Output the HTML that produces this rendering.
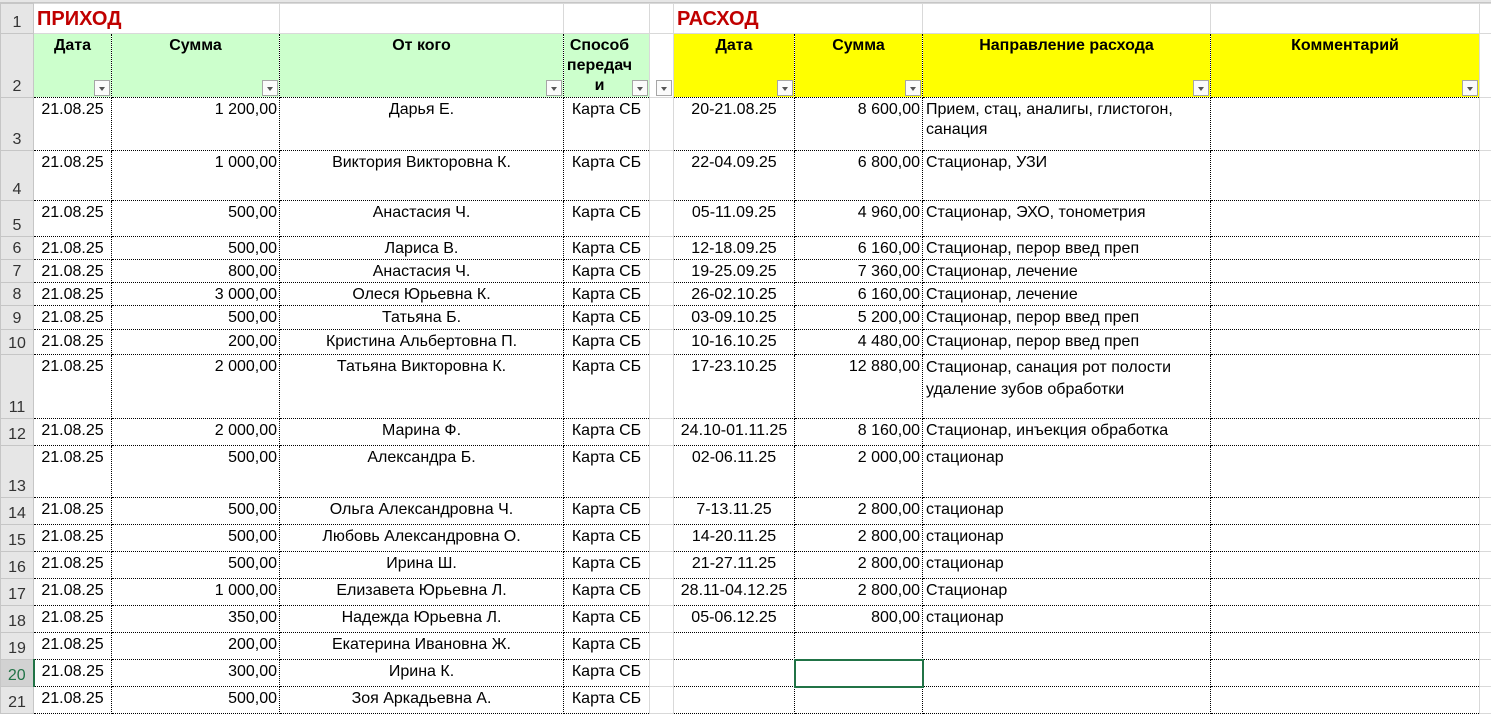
<!DOCTYPE html>
<html><head><meta charset="utf-8">
<style>
body{margin:0;background:#fff;width:1491px;height:696px;overflow:hidden;font-family:"Liberation Sans",sans-serif;font-size:16px;color:#000}
.top{height:3px;background:#e6e6e6;border-bottom:1px solid #c6c6c6;box-sizing:border-box}
table{border-collapse:collapse;table-layout:fixed;position:absolute;top:3px;left:0;width:1491px}
td{border:1px solid #d9d9d9;padding:2px 0 0 0;text-indent:3px;vertical-align:top;white-space:nowrap;overflow:hidden;line-height:20px;position:relative}
td.c,td.g,td.y,td.r{text-indent:0}
td.rh{background:#e6e6e6;border:1px solid #c6c6c6;color:#333;text-align:center;vertical-align:bottom;padding:0 0 1px 0;line-height:18px;text-indent:0}
td.rh.sel{background:#d2d2d2;color:#217346;border-right:2px solid #217346}
.d{border:1px dotted #000}
.c{text-align:center}.r{text-align:right}
.r:after{content:"";display:inline-block;width:2px}
.g{background:#ccffcc;font-weight:bold;text-align:center}
.y{background:#ffff00;font-weight:bold;text-align:center}
.t{color:#c00000;font-weight:bold;font-size:20px;padding-top:5px;overflow:visible}
.w{white-space:normal}
.f{position:absolute;right:1px;bottom:1px;width:16px;height:16px;box-sizing:border-box;border:1px solid #a6a6a6;background:#fbfbfb}
.f:after{content:"";position:absolute;left:4px;top:6px;border-left:3px solid transparent;border-right:3px solid transparent;border-top:4px solid #555}
.selc{outline:2px solid #217346;outline-offset:-1px}
</style></head><body>
<div class="top"></div>
<table>
<colgroup><col style="width:33px"><col style="width:78px"><col style="width:168px"><col style="width:284px"><col style="width:86px"><col style="width:24px"><col style="width:121px"><col style="width:128px"><col style="width:288px"><col style="width:269px"><col style="width:12px"></colgroup>
<tr style="height:30px"><td class="rh">1</td><td class="t" style="border-right-color:transparent">ПРИХОД</td><td style="border-left-color:transparent"></td><td></td><td></td><td></td><td class="t" style="border-right-color:transparent">РАСХОД</td><td style="border-left-color:transparent"></td><td></td><td></td><td></td></tr>
<tr style="height:64px"><td class="rh">2</td><td class="g d">Дата<div class="f"></div></td><td class="g d">Сумма<div class="f"></div></td><td class="g d">От кого<div class="f"></div></td><td class="g d w"><div style="margin-right:14px">Способ передач и</div><div class="f"></div></td><td><div class="f"></div></td><td class="y d">Дата<div class="f"></div></td><td class="y d">Сумма<div class="f"></div></td><td class="y d">Направление расхода<div class="f"></div></td><td class="y d">Комментарий<div class="f"></div></td><td></td></tr>
<tr style="height:53px"><td class="rh">3</td><td class="d c">21.08.25</td><td class="d r">1 200,00</td><td class="d c">Дарья Е.</td><td class="d c">Карта СБ</td><td></td><td class="d c">20-21.08.25</td><td class="d r">8 600,00</td><td class="d w" style="text-indent:0;padding-left:3px">Прием, стац, аналигы, глистогон, санация</td><td class="d"></td><td></td></tr>
<tr style="height:50px"><td class="rh">4</td><td class="d c">21.08.25</td><td class="d r">1 000,00</td><td class="d c">Виктория Викторовна К.</td><td class="d c">Карта СБ</td><td></td><td class="d c">22-04.09.25</td><td class="d r">6 800,00</td><td class="d">Стационар, УЗИ</td><td class="d"></td><td></td></tr>
<tr style="height:36px"><td class="rh">5</td><td class="d c">21.08.25</td><td class="d r">500,00</td><td class="d c">Анастасия Ч.</td><td class="d c">Карта СБ</td><td></td><td class="d c">05-11.09.25</td><td class="d r">4 960,00</td><td class="d">Стационар, ЭХО, тонометрия</td><td class="d"></td><td></td></tr>
<tr style="height:23px"><td class="rh">6</td><td class="d c">21.08.25</td><td class="d r">500,00</td><td class="d c">Лариса В.</td><td class="d c">Карта СБ</td><td></td><td class="d c">12-18.09.25</td><td class="d r">6 160,00</td><td class="d">Стационар, перор введ преп</td><td class="d"></td><td></td></tr>
<tr style="height:23px"><td class="rh">7</td><td class="d c">21.08.25</td><td class="d r">800,00</td><td class="d c">Анастасия Ч.</td><td class="d c">Карта СБ</td><td></td><td class="d c">19-25.09.25</td><td class="d r">7 360,00</td><td class="d">Стационар, лечение</td><td class="d"></td><td></td></tr>
<tr style="height:23px"><td class="rh">8</td><td class="d c">21.08.25</td><td class="d r">3 000,00</td><td class="d c">Олеся Юрьевна К.</td><td class="d c">Карта СБ</td><td></td><td class="d c">26-02.10.25</td><td class="d r">6 160,00</td><td class="d">Стационар, лечение</td><td class="d"></td><td></td></tr>
<tr style="height:24px"><td class="rh">9</td><td class="d c">21.08.25</td><td class="d r">500,00</td><td class="d c">Татьяна Б.</td><td class="d c">Карта СБ</td><td></td><td class="d c">03-09.10.25</td><td class="d r">5 200,00</td><td class="d">Стационар, перор введ преп</td><td class="d"></td><td></td></tr>
<tr style="height:25px"><td class="rh">10</td><td class="d c">21.08.25</td><td class="d r">200,00</td><td class="d c">Кристина Альбертовна П.</td><td class="d c">Карта СБ</td><td></td><td class="d c">10-16.10.25</td><td class="d r">4 480,00</td><td class="d">Стационар, перор введ преп</td><td class="d"></td><td></td></tr>
<tr style="height:64px"><td class="rh">11</td><td class="d c">21.08.25</td><td class="d r">2 000,00</td><td class="d c">Татьяна Викторовна К.</td><td class="d c">Карта СБ</td><td></td><td class="d c">17-23.10.25</td><td class="d r">12 880,00</td><td class="d w" style="line-height:22px;text-indent:0;padding-left:3px">Стационар, санация рот полости удаление зубов обработки</td><td class="d"></td><td></td></tr>
<tr style="height:27px"><td class="rh">12</td><td class="d c">21.08.25</td><td class="d r">2 000,00</td><td class="d c">Марина Ф.</td><td class="d c">Карта СБ</td><td></td><td class="d c">24.10-01.11.25</td><td class="d r">8 160,00</td><td class="d">Стационар, инъекция обработка</td><td class="d"></td><td></td></tr>
<tr style="height:52px"><td class="rh">13</td><td class="d c">21.08.25</td><td class="d r">500,00</td><td class="d c">Александра Б.</td><td class="d c">Карта СБ</td><td></td><td class="d c">02-06.11.25</td><td class="d r">2 000,00</td><td class="d">стационар</td><td class="d"></td><td></td></tr>
<tr style="height:27px"><td class="rh">14</td><td class="d c">21.08.25</td><td class="d r">500,00</td><td class="d c">Ольга Александровна Ч.</td><td class="d c">Карта СБ</td><td></td><td class="d c">7-13.11.25</td><td class="d r">2 800,00</td><td class="d">стационар</td><td class="d"></td><td></td></tr>
<tr style="height:27px"><td class="rh">15</td><td class="d c">21.08.25</td><td class="d r">500,00</td><td class="d c">Любовь Александровна О.</td><td class="d c">Карта СБ</td><td></td><td class="d c">14-20.11.25</td><td class="d r">2 800,00</td><td class="d">стационар</td><td class="d"></td><td></td></tr>
<tr style="height:27px"><td class="rh">16</td><td class="d c">21.08.25</td><td class="d r">500,00</td><td class="d c">Ирина Ш.</td><td class="d c">Карта СБ</td><td></td><td class="d c">21-27.11.25</td><td class="d r">2 800,00</td><td class="d">стационар</td><td class="d"></td><td></td></tr>
<tr style="height:27px"><td class="rh">17</td><td class="d c">21.08.25</td><td class="d r">1 000,00</td><td class="d c">Елизавета Юрьевна Л.</td><td class="d c">Карта СБ</td><td></td><td class="d c">28.11-04.12.25</td><td class="d r">2 800,00</td><td class="d">Стационар</td><td class="d"></td><td></td></tr>
<tr style="height:27px"><td class="rh">18</td><td class="d c">21.08.25</td><td class="d r">350,00</td><td class="d c">Надежда Юрьевна Л.</td><td class="d c">Карта СБ</td><td></td><td class="d c">05-06.12.25</td><td class="d r">800,00</td><td class="d">стационар</td><td class="d"></td><td></td></tr>
<tr style="height:27px"><td class="rh">19</td><td class="d c">21.08.25</td><td class="d r">200,00</td><td class="d c">Екатерина Ивановна Ж.</td><td class="d c">Карта СБ</td><td></td><td class="d"></td><td class="d"></td><td class="d"></td><td class="d"></td><td></td></tr>
<tr style="height:27px"><td class="rh sel">20</td><td class="d c">21.08.25</td><td class="d r">300,00</td><td class="d c">Ирина К.</td><td class="d c">Карта СБ</td><td></td><td class="d"></td><td class="d selc"></td><td class="d"></td><td class="d"></td><td></td></tr>
<tr style="height:27px"><td class="rh">21</td><td class="d c">21.08.25</td><td class="d r">500,00</td><td class="d c">Зоя Аркадьевна А.</td><td class="d c">Карта СБ</td><td></td><td class="d"></td><td class="d"></td><td class="d"></td><td class="d"></td><td></td></tr>
</table>
</body></html>
